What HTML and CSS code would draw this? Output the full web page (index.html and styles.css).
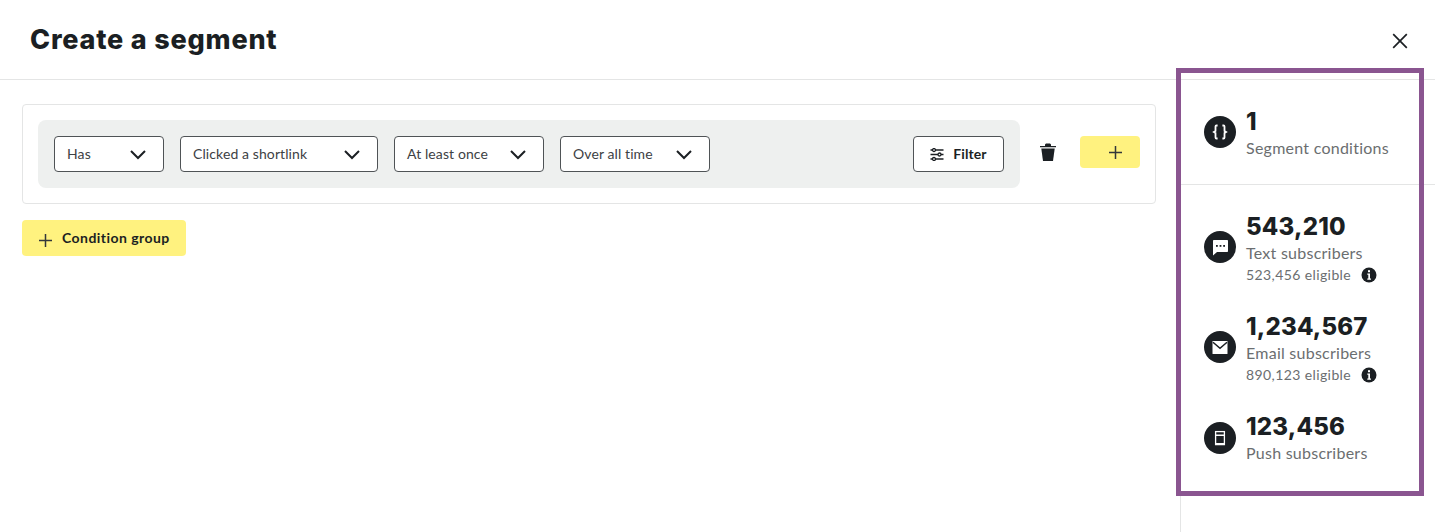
FILE: index.html
```html
<!DOCTYPE html>
<html lang="en">
<head>
<meta charset="utf-8">
<title>Create a segment</title>
<link rel="stylesheet" href="styles.css">
</head>
<body>
<div class="page">
  <header class="topbar">
    <h1 class="title">Create a segment</h1>
    <button class="close" aria-label="Close">
      <svg width="16" height="16" viewBox="0 0 16 16"><path d="M1.2 1.2 14.8 14.8M14.8 1.2 1.2 14.8" stroke="#1b1f23" stroke-width="1.7" fill="none"/></svg>
    </button>
  </header>
  <div class="body">
    <main class="main">
      <section class="card">
        <div class="conditions">
          <div class="select s-has"><span>Has</span><svg class="chev" width="18" height="11" viewBox="0 0 18 11"><path d="M2 2 9 9 16 2" stroke="#1b1f23" stroke-width="2" fill="none"/></svg></div>
          <div class="select s-click"><span>Clicked a shortlink</span><svg class="chev" width="18" height="11" viewBox="0 0 18 11"><path d="M2 2 9 9 16 2" stroke="#1b1f23" stroke-width="2" fill="none"/></svg></div>
          <div class="select s-wide"><span>At least once</span><svg class="chev" width="18" height="11" viewBox="0 0 18 11"><path d="M2 2 9 9 16 2" stroke="#1b1f23" stroke-width="2" fill="none"/></svg></div>
          <div class="select s-wide"><span>Over all time</span><svg class="chev" width="18" height="11" viewBox="0 0 18 11"><path d="M2 2 9 9 16 2" stroke="#1b1f23" stroke-width="2" fill="none"/></svg></div>
          <button class="filter">
            <svg width="14" height="13" viewBox="0 0 14 13"><g stroke="#1b1f23" stroke-width="1.3" fill="none"><path d="M.5 2h13M.5 6.500h13M.5 11h13"/><circle cx="4" cy="2" r="1.500" fill="#fff"/><circle cx="9.500" cy="6.500" r="1.500" fill="#fff"/><circle cx="4" cy="11" r="1.500" fill="#fff"/></g></svg>
            <span>Filter</span>
          </button>
        </div>
        <button class="trash" aria-label="Delete">
          <svg width="16" height="19" viewBox="0 0 16 19"><path d="M0 3h16v1.200H0zM5 1.500 6 .5h4l1 1V3H5z" fill="#1b1f23"/><path d="M1.300 5.500h13.400L13 18H3z" fill="#1b1f23"/></svg>
        </button>
        <button class="add" aria-label="Add">
          <svg width="13" height="13" viewBox="0 0 13 13"><path d="M6.500 0v13M0 6.500h13" stroke="#33373a" stroke-width="1.500"/></svg>
        </button>
      </section>
      <button class="group">
        <svg class="group-plus" width="13" height="13" viewBox="0 0 13 13"><path d="M6.500 0v13M0 6.500h13" stroke="#33373a" stroke-width="1.500"/></svg>
        <span>Condition group</span>
      </button>
    </main>
    <aside class="side">
      <div class="sec sec-top">
        <div class="row">
          <span class="ico"><svg width="32" height="32" viewBox="0 0 32 32"><g stroke="#fff" stroke-width="1.800" fill="none"><path d="M13.600 9.500h-1.100a1 1 0 0 0-1 1V15l-1.600 1 1.600 1v4.500a1 1 0 0 0 1 1h1.100"/><path d="M18.400 9.500h1.100a1 1 0 0 1 1 1V15l1.600 1-1.600 1v4.500a1 1 0 0 1-1 1h-1.100"/></g></svg></span>
          <div class="txt txt-first"><div class="num">1</div><div class="lbl">Segment conditions</div></div>
        </div>
      </div>
      <div class="sec sec-list">
        <div class="row">
          <span class="ico"><svg width="32" height="32" viewBox="0 0 32 32"><path d="M9.800 9h13.400a.8.800 0 0 1 .8.800v10.400a.8.800 0 0 1-.8.800H13l-4 3.500V9.800a.8.800 0 0 1 .8-.8z" fill="#fff"/><g fill="#1b1f23"><rect x="12" y="14" width="1.800" height="1.800"/><rect x="15.600" y="14" width="1.800" height="1.800"/><rect x="19.200" y="14" width="1.800" height="1.800"/></g></svg></span>
          <div class="txt"><div class="num">543,210</div><div class="lbl">Text subscribers</div>
            <div class="elig"><span>523,456 eligible</span><svg class="info" width="16" height="16" viewBox="0 0 16 16"><circle cx="8" cy="8" r="7.500" fill="#1b1f23"/><rect x="7" y="3.200" width="2" height="2" fill="#fff"/><path d="M6.300 6.500H9v5h1v1.300H6.300v-1.300h1V7.800h-1z" fill="#fff"/></svg></div></div>
        </div>
        <div class="row">
          <span class="ico"><svg width="32" height="32" viewBox="0 0 32 32"><rect x="8.500" y="10" width="15" height="13" rx=".6" fill="#fff"/><path d="M9 11.200l7 6 7-6" fill="none" stroke="#1b1f23" stroke-width="1.500"/></svg></span>
          <div class="txt"><div class="num">1,234,567</div><div class="lbl">Email subscribers</div>
            <div class="elig"><span>890,123 eligible</span><svg class="info" width="16" height="16" viewBox="0 0 16 16"><circle cx="8" cy="8" r="7.500" fill="#1b1f23"/><rect x="7" y="3.200" width="2" height="2" fill="#fff"/><path d="M6.300 6.500H9v5h1v1.300H6.300v-1.300h1V7.800h-1z" fill="#fff"/></svg></div></div>
        </div>
        <div class="row">
          <span class="ico"><svg width="32" height="32" viewBox="0 0 32 32"><rect x="11.600" y="9.600" width="8.800" height="13" fill="none" stroke="#fff" stroke-width="1.300"/><rect x="11.600" y="12.500" width="8.800" height="1.500" fill="#fff"/><rect x="11.600" y="21" width="8.800" height="1.500" fill="#fff"/></svg></span>
          <div class="txt"><div class="num">123,456</div><div class="lbl">Push subscribers</div></div>
        </div>
      </div>
    </aside>
  </div>
  <div class="highlight"></div>
</div>
</body>
</html>
```
FILE: styles.css
```css
* { box-sizing: border-box; }
html, body { margin: 0; padding: 0; }
body { background: #fff; color: #1b1f23; font-family: "Lato", "Liberation Sans", sans-serif; }
button { font-family: inherit; cursor: pointer; }
.page { position: relative; width: 1435px; height: 532px; overflow: hidden; }
.topbar { height: 80px; border-bottom: 1px solid #e4e5e5; display: flex; align-items: center; justify-content: space-between; padding: 0 27px 0 30px; }
.title { margin: 0; font-family: "Inter", "Liberation Sans", sans-serif; font-size: 27px; font-weight: 800; line-height: 32px; letter-spacing: .8px; }
.close { background: none; border: 0; padding: 0; display: flex; margin-top: 2px; }
.body { display: flex; height: 452px; }
.main { width: 1180px; padding: 24px 24px 0 22px; }
.card { height: 100px; border: 1px solid #e4e5e5; border-radius: 4px; display: flex; align-items: flex-start; padding: 15px; }
.conditions { width: 982px; height: 68px; background: #eef0ef; border-radius: 8px; display: flex; align-items: center; gap: 16px; padding: 0 16px; }
.select { height: 36px; background: #fff; border: 1px solid #4f5356; border-radius: 4px; display: flex; align-items: center; justify-content: space-between; padding: 0 16px 0 12px; font-size: 14px; letter-spacing: .1px; color: #3d4144; }
.select span, .filter span { padding-bottom: 2px; }
.s-has { width: 110px; }
.s-click { width: 198px; }
.s-wide { width: 150px; }
.filter { margin-left: auto; width: 91px; height: 36px; background: #fff; border: 1px solid #4f5356; border-radius: 4px; display: flex; align-items: center; justify-content: center; gap: 9px; padding: 0; font-size: 14px; font-weight: 700; letter-spacing: .1px; color: #1b1f23; }
.trash { background: none; border: 0; padding: 0; margin: 23px 0 0 20px; display: flex; }
.add { width: 60px; height: 32px; margin: 16px 0 0 24px; background: #fff27f; border: 0; border-radius: 4px; display: flex; align-items: center; justify-content: center; padding: 0 0 0 11px; }
.group { margin-top: 16px; width: 164px; height: 36px; background: #fff27f; border: 0; border-radius: 4px; display: flex; align-items: center; gap: 10px; padding: 0 0 0 17px; font-size: 14px; font-weight: 700; letter-spacing: .45px; color: #1b1f23; }
.group span { padding-bottom: 2px; }
.group-plus { margin-top: 4px; }
.side { width: 255px; border-left: 1px solid #e4e5e5; }
.sec-top { height: 105px; padding: 24px 0 0 23px; border-bottom: 1px solid #e4e5e5; }
.sec-list { padding: 25px 0 0 23px; display: flex; flex-direction: column; gap: 26px; }
.row { display: flex; align-items: center; gap: 10px; }
.ico { width: 32px; height: 32px; border-radius: 50%; background: #1b1f23; display: flex; flex: none; }
.txt { padding-top: 3px; }
.txt-first { padding-top: 4px; }
.num { font-family: "Inter", "Liberation Sans", sans-serif; font-size: 24px; font-weight: 800; line-height: 28px; letter-spacing: .2px; }
.lbl { font-size: 16px; line-height: 24px; letter-spacing: .25px; color: #6b6e70; }
.elig { display: flex; align-items: center; gap: 10px; height: 19px; font-size: 14px; letter-spacing: .4px; color: #6b6e70; }
.highlight { position: absolute; left: 1176px; top: 68px; width: 248px; height: 428px; border: 5px solid #8a5590; }
```
